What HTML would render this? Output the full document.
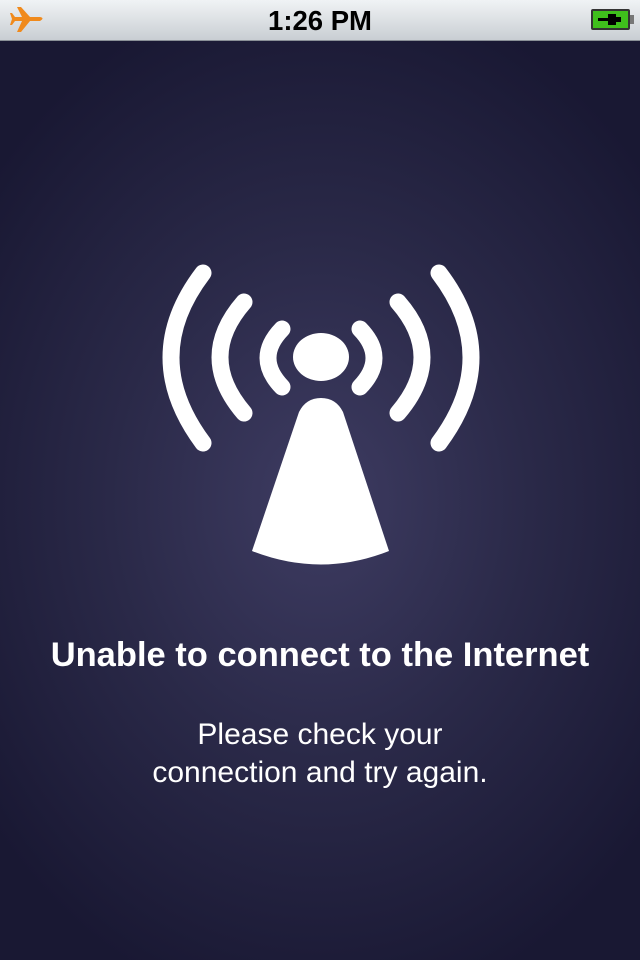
<!DOCTYPE html>
<html><head><style>
body{margin:0;width:640px;height:960px;overflow:hidden;font-family:"Liberation Sans",sans-serif;}
.sb{position:absolute;top:0;left:0;width:640px;height:40px;background:linear-gradient(#f0f3f5,#c9ced3);border-bottom:1px solid #8a9097;}
.time{position:absolute;top:5px;width:640px;text-align:center;font-weight:bold;font-size:27.5px;color:#000;}
.main{position:absolute;top:41px;left:0;width:640px;height:919px;background:radial-gradient(ellipse 420px 520px at 320px 460px,#3e3c62 0%,#2a2948 50%,#191833 100%);}
.t1{position:absolute;top:636px;width:640px;text-align:center;color:#fff;font-weight:bold;font-size:34.5px;}
.t2{position:absolute;top:716px;width:640px;text-align:center;color:#fff;font-size:30px;line-height:38px;}
</style></head><body>
<div class="sb">
<svg style="position:absolute;left:8px;top:4px" width="40" height="32" viewBox="0 0 40 32"><path d="M9 3 L13 3 L22 13 L32 13 Q37 14 32 17 L22 17 L13 28 L9 28 L14 17 L7 17 L4 21 L2 21 L4 15 L2 9 L4 9 L7 13 L14 13 Z" fill="#f08a1c"/></svg>
<div class="time">1:26 PM</div>
<svg style="position:absolute;left:590px;top:8px" width="46" height="24" viewBox="0 0 46 24"><rect x="1" y="1" width="39" height="21" rx="2" fill="#333"/><rect x="3" y="3" width="35" height="17" fill="#3fbf1c"/><rect x="40" y="7" width="4" height="9" fill="#777"/><path d="M8 10h10v-4h8v3h5v5h-5v3h-8v-4h-10z" fill="#000"/></svg>
</div>
<div class="main"></div>
<svg style="position:absolute;left:0;top:0" width="640" height="960">
<g fill="none" stroke="#fff" stroke-width="17" stroke-linecap="round">
<path d="M203 273 Q139 357 203 443"/><path d="M244 302 Q196 357 244 413"/><path d="M282 329 Q254 358 282 387"/>
<path d="M439 273 Q503 357 439 443"/><path d="M398 302 Q446 357 398 413"/><path d="M360 329 Q388 358 360 387"/>
</g>
<ellipse cx="321" cy="357" rx="28" ry="24" fill="#fff"/>
<path d="M252 551 L299 412 Q306 398 321 398 Q336 398 343 412 L389 551 Q321 578 252 551 Z" fill="#fff"/>
</svg>
<div class="t1">Unable to connect to the Internet</div>
<div class="t2">Please check your<br>connection and try again.</div>
</body></html>
